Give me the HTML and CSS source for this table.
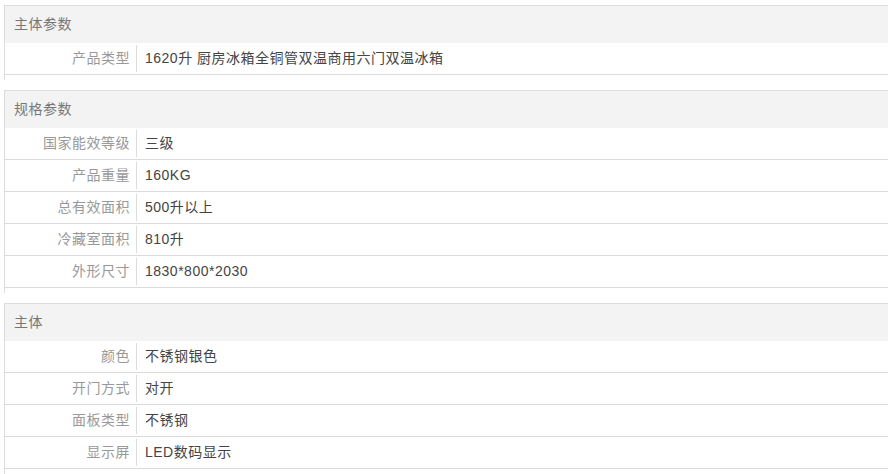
FILE: index.html
```html
<!DOCTYPE html>
<html lang="zh-CN">
<head>
<meta charset="utf-8">
<title>规格参数</title>
<link rel="stylesheet" href="styles.css">
</head>
<body>
<div class="ptable">
  <div class="group">
    <h3 class="group-title">主体参数</h3>
    <dl class="row"><dt class="label">产品类型</dt><dd class="value">1620升 厨房冰箱全铜管双温商用六门双温冰箱</dd></dl>
  </div>
  <div class="group">
    <h3 class="group-title">规格参数</h3>
    <dl class="row"><dt class="label">国家能效等级</dt><dd class="value">三级</dd></dl>
    <dl class="row"><dt class="label">产品重量</dt><dd class="value">160KG</dd></dl>
    <dl class="row"><dt class="label">总有效面积</dt><dd class="value">500升以上</dd></dl>
    <dl class="row"><dt class="label">冷藏室面积</dt><dd class="value">810升</dd></dl>
    <dl class="row"><dt class="label">外形尺寸</dt><dd class="value">1830*800*2030</dd></dl>
  </div>
  <div class="group">
    <h3 class="group-title">主体</h3>
    <dl class="row"><dt class="label">颜色</dt><dd class="value">不锈钢银色</dd></dl>
    <dl class="row"><dt class="label">开门方式</dt><dd class="value">对开</dd></dl>
    <dl class="row"><dt class="label">面板类型</dt><dd class="value">不锈钢</dd></dl>
    <dl class="row"><dt class="label">显示屏</dt><dd class="value">LED数码显示</dd></dl>
  </div>
</div>
</body>
</html>
```
FILE: styles.css
```css
html, body {
  margin: 0;
  padding: 0;
  background: #fff;
}
body {
  font-family: "Liberation Sans", "Noto Sans CJK SC", sans-serif;
  font-size: 14px;
  letter-spacing: 0.5px;
  color: #333;
}
.ptable {
  padding: 5px 5px 0 4px;
}
.group {
  border-top: 1px solid #dcdcdc;
  border-left: 1px solid #dcdcdc;
  padding-bottom: 5px;
  margin-bottom: 10px;
}
.group-title {
  margin: 0;
  height: 37px;
  line-height: 37px;
  padding-left: 9px;
  background: #f3f3f3;
  font-size: 14px;
  font-weight: normal;
  color: #777;
}
.row {
  display: flex;
  margin: 0;
  padding: 2px 0;
  height: 27px;
  border-bottom: 1px solid #dcdcdc;
}
.label {
  width: 125px;
  flex: none;
  padding-right: 6px;
  text-align: right;
  border-right: 1px solid #dcdcdc;
  line-height: 27px;
  color: #999;
}
.value {
  margin: 0;
  padding-left: 8px;
  line-height: 27px;
  color: #444;
}
```
